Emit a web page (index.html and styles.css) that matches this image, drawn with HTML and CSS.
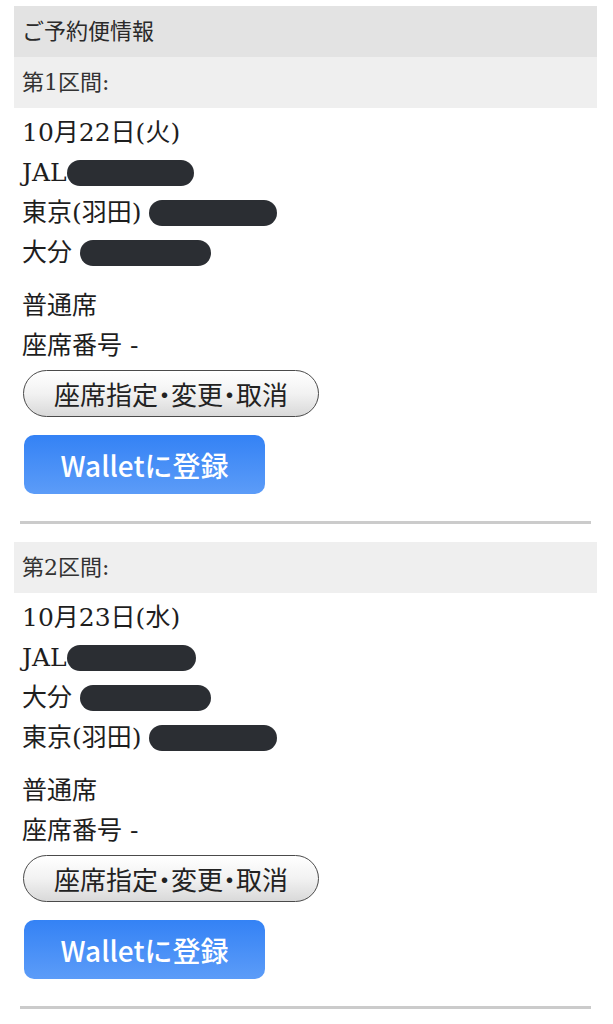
FILE: index.html
```html
<!DOCTYPE html>
<html lang="ja">
<head>
<meta charset="utf-8">
<title>ご予約便情報</title>
<link rel="stylesheet" href="styles.css">
</head>
<body>
<div class="page">
  <div class="title">ご予約便情報</div>

  <section class="leg">
    <div class="leg-head">第1区間:</div>
    <div class="leg-body">
      <div class="info">
        <div class="line">10月22日(火)</div>
        <div class="line">JAL<span class="mask m-flight"></span></div>
        <div class="line">東京(羽田) <span class="mask m-long"></span></div>
        <div class="line">大分 <span class="mask m-mid"></span></div>
      </div>
      <div class="seat">
        <div class="line">普通席</div>
        <div class="line">座席番号 -</div>
      </div>
      <button class="pill">座席指定・変更・取消</button>
      <button class="wallet">Walletに登録</button>
    </div>
    <hr class="rule">
  </section>

  <section class="leg">
    <div class="leg-head">第2区間:</div>
    <div class="leg-body">
      <div class="info">
        <div class="line">10月23日(水)</div>
        <div class="line">JAL<span class="mask m-flight2"></span></div>
        <div class="line">大分 <span class="mask m-mid"></span></div>
        <div class="line">東京(羽田) <span class="mask m-long"></span></div>
      </div>
      <div class="seat">
        <div class="line">普通席</div>
        <div class="line">座席番号 -</div>
      </div>
      <button class="pill">座席指定・変更・取消</button>
      <button class="wallet">Walletに登録</button>
    </div>
    <hr class="rule">
  </section>
</div>
</body>
</html>
```

FILE: styles.css
```css
* { box-sizing: border-box; }
html, body { margin: 0; padding: 0; background: #fff; }
body {
  font-family: "DejaVu Serif", "Noto Sans CJK JP", serif;
  color: #1e1e1e;
}
.page {
  width: 613px;
  padding: 6px 16px 0 14px;
}
.title {
  height: 51px;
  background: #e3e3e3;
  padding-left: 8px;
  font-size: 22px;
  line-height: 51px;
  color: #2a2a2a;
}
.leg-head {
  height: 51px;
  background: #efefef;
  padding-left: 8px;
  font-size: 22px;
  line-height: 51px;
  color: #333;
}
.leg-body {
  padding: 5px 0 0 8px;
  display: flex;
  flex-direction: column;
  align-items: flex-start;
}
.line {
  height: 40px;
  line-height: 40px;
  font-size: 25px;
  white-space: nowrap;
}
.seat { margin-top: 13px; }
.mask {
  display: inline-block;
  height: 26px;
  border-radius: 13px;
  background: #2b2e33;
  vertical-align: middle;
  position: relative;
  top: -2px;
}
.m-flight { width: 127px; }
.m-flight2 { width: 129px; }
.m-long { width: 128px; }
.m-mid { width: 131px; }
.pill {
  margin: 4px 0 0 1px;
  width: 296px;
  height: 47px;
  border: 1.5px solid #4a4a4a;
  border-radius: 24px;
  background: linear-gradient(#ffffff, #f2f2f2 50%, #d9d9d9);
  font-family: "Noto Sans CJK JP", sans-serif;
  font-size: 26px;
  font-feature-settings: "palt";
  color: #222;
  padding: 0;
  line-height: 1;
}
.wallet {
  margin: 18px 0 0 2px;
  width: 241px;
  height: 59px;
  border: none;
  border-radius: 10px;
  background: linear-gradient(#3482f5, #5c9cf8);
  color: #fff;
  font-family: "Noto Sans CJK JP", sans-serif;
  font-weight: 500;
  font-size: 28px;
  padding: 0;
  line-height: 1;
}
.rule {
  margin: 27px 6px 18px 6px;
  border: none;
  height: 3px;
  background: #cbcbcb;
}
```
